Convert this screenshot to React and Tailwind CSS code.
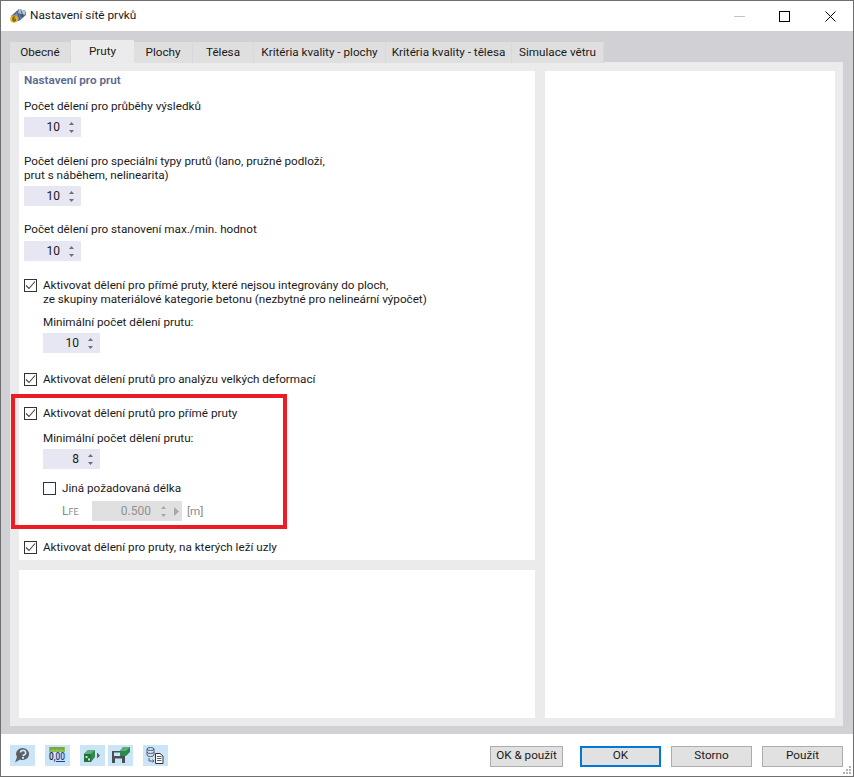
import React from 'react'

const tabs = [
  ['Obecné', 'w-[61px]'],
  ['Pruty', 'w-[63px]'],
  ['Plochy', 'w-[59px]'],
  ['Tělesa', 'w-[61px]'],
  ['Kritéria kvality - plochy', 'w-[132px]'],
  ['Kritéria kvality - tělesa', 'w-[126px]'],
  ['Simulace větru', 'w-[92px]'],
]

const Arrows = ({ muted }) => (
  <svg width="7" height="15" viewBox="0 0 7 15" className="shrink-0">
    <path d="M3.5 2 L6 5 L1 5 Z" fill={muted ? '#a8a8a8' : '#707070'} />
    <path d="M3.5 13 L6 10 L1 10 Z" fill={muted ? '#a8a8a8' : '#707070'} />
  </svg>
)

const Spinner = ({ value }) => (
  <div className="w-[57px] h-5 bg-[#e6e7f2] flex items-center justify-end pr-[6px] gap-[8px] text-[12px] text-[#1a1a1a]">
    <span>{value}</span>
    <Arrows />
  </div>
)

const Checkbox = ({ checked }) => (
  <div className="w-[13px] h-[13px] border border-[#333333] bg-white flex items-center justify-center shrink-0">
    {checked && (
      <svg width="11" height="11" viewBox="0 0 11 11">
        <path d="M1 5.5 L4 8.5 L10 1.5" fill="none" stroke="#444444" strokeWidth="1.1" />
      </svg>
    )}
  </div>
)

const CheckRow = ({ checked, children }) => (
  <div className="flex items-start gap-[6px]">
    <div className="mt-px"><Checkbox checked={checked} /></div>
    <div className="leading-[14px]">{children}</div>
  </div>
)

const FooterIcon = ({ children, className }) => (
  <div className={`h-[21px] w-[25px] bg-[#cce4f7] ${className || ''}`}>
    <svg width="25" height="21" viewBox="0 0 25 21" className="block">{children}</svg>
  </div>
)

const FooterButton = ({ children, primary, className }) => (
  <button className={`h-[21px] bg-[#e1e1e1] text-[#1a1a1a] flex items-center justify-center ${primary ? 'border-2 border-[#0078d7]' : 'border border-[#adadad]'} ${className}`}>
    {children}
  </button>
)

export default function App() {
  return (
    <div className="w-[854px] h-[777px] bg-white flex flex-col border border-[#6f6f6f] overflow-hidden text-[11.7px] text-[#1a1a1a] font-['Roboto',sans-serif] relative">
      {/* Title bar */}
      <div className="h-[30px] flex items-center shrink-0">
        <svg width="20" height="20" viewBox="0 0 20 20" className="ml-[8px]">
          <path d="M2 10 L10 3 L17 5 L17 9 L10 15 L5 15 Z" fill="#4f6388" />
          <path d="M10 3 L17 5 L16 9 L9 7 Z" fill="#b9c4d6" />
          <path d="M6 8 L9 6 L12 12 L9 15 Z" fill="#7f91b0" />
          <path d="M12 4.5 L14 10.5 M8.5 6.5 L11 13.5" stroke="#2f3f5c" strokeWidth="0.8" />
          <circle cx="5" cy="13" r="3.8" fill="#e3b52e" />
          <path d="M6.3 11 H4 V15 H6.3 V13 H4" fill="none" stroke="#5a4300" strokeWidth="0.9" />
        </svg>
        <span className="ml-px text-[11.8px]">Nastavení sítě prvků</span>
        <div className="ml-auto flex items-center">
          <div className="w-[11px] h-px bg-[#c4c4c4] mr-[34px]" />
          <div className="w-[11px] h-[11px] border border-black mr-[35px]" />
          <svg width="11" height="11" viewBox="0 0 11 11" className="mr-[17px]">
            <path d="M0.5 0.5 L10.5 10.5 M10.5 0.5 L0.5 10.5" stroke="#000" strokeWidth="1" />
          </svg>
        </div>
      </div>

      {/* Body */}
      <div className="flex-1 bg-[#d0d0d5] flex flex-col pt-[9px] pl-[9px]">
        <div className="flex items-end h-[23px] shrink-0 relative z-10">
          {tabs.map(([label, w], i) => (
            <div
              key={label}
              className={`${w} flex items-center justify-center whitespace-nowrap ${i === 1 ? 'h-[23px] bg-[#ebebeb]' : 'h-[21px] bg-[#dfdfdf] border-r border-[#d8d8dc]'}`}
            >
              {label}
            </div>
          ))}
        </div>
        <div className="h-[664px] w-[833px] bg-[#ebebeb] pl-[9px] pr-[8px] pt-[9px] pb-[8px] flex gap-[10px] -mt-px">
          <div className="w-[516px] flex flex-col gap-[10px]">
            <div className="h-[489px] bg-white px-[5px] flex flex-col leading-[14px]">
              <div className="mt-[2px] text-[#5a6a8e] font-semibold">Nastavení pro prut</div>
              <div className="mt-[12px]">Počet dělení pro průběhy výsledků</div>
              <div className="mt-[4px]"><Spinner value="10" /></div>
              <div className="mt-[17px]">
                Počet dělení pro speciální typy prutů (lano, pružné podloží,<br />prut s náběhem, nelinearita)
              </div>
              <div className="mt-[4px]"><Spinner value="10" /></div>
              <div className="mt-[16px]">Počet dělení pro stanovení max./min. hodnot</div>
              <div className="mt-[5px]"><Spinner value="10" /></div>
              <div className="mt-[17px]">
                <CheckRow checked>
                  Aktivovat dělení pro přímé pruty, které nejsou integrovány do ploch,<br />
                  ze skupiny materiálové kategorie betonu (nezbytné pro nelineární výpočet)
                </CheckRow>
              </div>
              <div className="mt-[9px] ml-[19px]">Minimální počet dělení prutu:</div>
              <div className="mt-[4px] ml-[19px]"><Spinner value="10" /></div>
              <div className="mt-[19px]"><CheckRow checked>Aktivovat dělení prutů pro analýzu velkých deformací</CheckRow></div>
              <div className="mt-[20px]"><CheckRow checked>Aktivovat dělení prutů pro přímé pruty</CheckRow></div>
              <div className="mt-[11px] ml-[19px]">Minimální počet dělení prutu:</div>
              <div className="mt-[4px] ml-[19px]"><Spinner value="8" /></div>
              <div className="mt-[12px] ml-[19px]"><CheckRow>Jiná požadovaná délka</CheckRow></div>
              <div className="mt-[6px] ml-[38px] flex items-center h-5 text-[#8a8a8a]">
                <span className="w-[30px]"><span className="text-[12px]">L</span><span className="text-[9px]">FE</span></span>
                <div className="w-[90px] h-5 bg-[#e0e0e0] flex items-center justify-end pr-[3px] text-[12px] text-[#909090]">
                  <span>0.500</span>
                  <span className="ml-[9px]"><Arrows muted /></span>
                  <svg width="5" height="9" viewBox="0 0 5 9" className="ml-[7px]"><path d="M0 0 L5 4.5 L0 9 Z" fill="#a8a8a8" /></svg>
                </div>
                <span className="ml-[5px]">[m]</span>
              </div>
              <div className="mt-[19px]"><CheckRow checked>Aktivovat dělení pro pruty, na kterých leží uzly</CheckRow></div>
            </div>
            <div className="flex-1 bg-white" />
          </div>
          <div className="w-[290px] bg-white" />
        </div>
      </div>

      {/* Footer */}
      <div className="h-[42px] shrink-0 flex items-center pl-[9px] pr-[10px]">
        <FooterIcon>
          <path d="M13 3 A6.5 6 0 1 1 10 14.5 L5 17.5 L7 12 A6.5 6 0 0 1 13 3 Z" fill="#5a5f66" />
          <path d="M10.5 7.5 A2.6 2.3 0 1 1 13.5 10 L13 11" fill="none" stroke="#cce4f7" strokeWidth="1.7" />
          <rect x="12" y="12" width="2" height="1.8" fill="#cce4f7" />
        </FooterIcon>
        <FooterIcon className="ml-[10px]">
          <rect x="4" y="2" width="16" height="5" fill="#8cc152" />
          <path d="M6 2 V5 M8 2 V4 M10 2 V5 M12 2 V4 M14 2 V5 M16 2 V4 M18 2 V5" stroke="#4f7f2a" strokeWidth="0.7" />
          <text x="4" y="15" fontSize="10" textLength="16" lengthAdjust="spacingAndGlyphs" fontWeight="500" fontFamily="Roboto, sans-serif" fill="#222">0,<tspan fill="#1f3f8f">00</tspan></text>
          <path d="M11 16.5 H20" stroke="#1f3f8f" strokeWidth="1" />
        </FooterIcon>
        <FooterIcon className="ml-[10px]">
          <path d="M4 9 L8 5 L15 5 L15 12 L11 17 L4 17 Z" fill="#2b8a4a" />
          <path d="M4 9 H11 V17 H4 Z" fill="#23703c" />
          <path d="M4 9 L8 5 H15 L11 9 Z" fill="#5fae78" />
          <rect x="5.5" y="11" width="2" height="2" fill="#cfe8d6" />
          <rect x="8" y="13.5" width="2" height="2" fill="#cfe8d6" />
          <path d="M17 7.5 L20 10.5 L17 13.5 Z" fill="#5a5f66" />
        </FooterIcon>
        <FooterIcon className="ml-[3px]">
          <path d="M4 6 H15 L17 8 V18 H4 Z" fill="#4a4f55" />
          <rect x="6" y="7.5" width="6" height="3.5" fill="#cce4f7" />
          <rect x="7" y="13.5" width="7" height="4.5" fill="#cce4f7" />
          <path d="M12 6 L15 2 H22 V7 L18 11 H12 Z" fill="#2b8a4a" />
          <path d="M12 6 L15 2 H22 L18 6 Z" fill="#5fae78" />
        </FooterIcon>
        <FooterIcon className="ml-[10px]">
          <ellipse cx="7.5" cy="4" rx="3.5" ry="1.5" fill="none" stroke="#5a5f66" />
          <path d="M4 4 V10 A3.5 1.5 0 0 0 11 10 V4 M4 7 A3.5 1.5 0 0 0 11 7" fill="none" stroke="#5a5f66" />
          <path d="M6 13 V16 H11 M9.5 14.5 L11 16 L9.5 17.5" fill="none" stroke="#5a5f66" />
          <path d="M12.5 8.5 H17 L20 11 V18.5 H12.5 Z" fill="#fff" stroke="#333" />
          <path d="M14 11.5 H18.5 M14 13.5 H18.5 M14 15.5 H18.5" stroke="#333" strokeWidth="0.8" />
        </FooterIcon>
        <div className="ml-auto flex items-center mt-[2px]">
          <FooterButton className="w-[73px]">OK &amp; použít</FooterButton>
          <FooterButton primary className="w-[81px] ml-[17px]">OK</FooterButton>
          <FooterButton className="w-[81px] ml-[10px]">Storno</FooterButton>
          <FooterButton className="w-[81px] ml-[10px]">Použít</FooterButton>
        </div>
      </div>

      {/* Red highlight drawn over the dialog */}
      <div className="absolute left-[10px] top-[393px] w-[276px] h-[135px] border-[4px] border-[#ed1c24] pointer-events-none" />

      {/* Resize grip */}
      <svg width="10" height="10" viewBox="0 0 10 10" className="absolute right-[1px] bottom-[1px]">
        <path d="M7 1 h2 v2 h-2 Z M4 4 h2 v2 h-2 Z M7 4 h2 v2 h-2 Z M1 7 h2 v2 h-2 Z M4 7 h2 v2 h-2 Z M7 7 h2 v2 h-2 Z" fill="#b4b4b4" />
      </svg>
    </div>
  )
}
